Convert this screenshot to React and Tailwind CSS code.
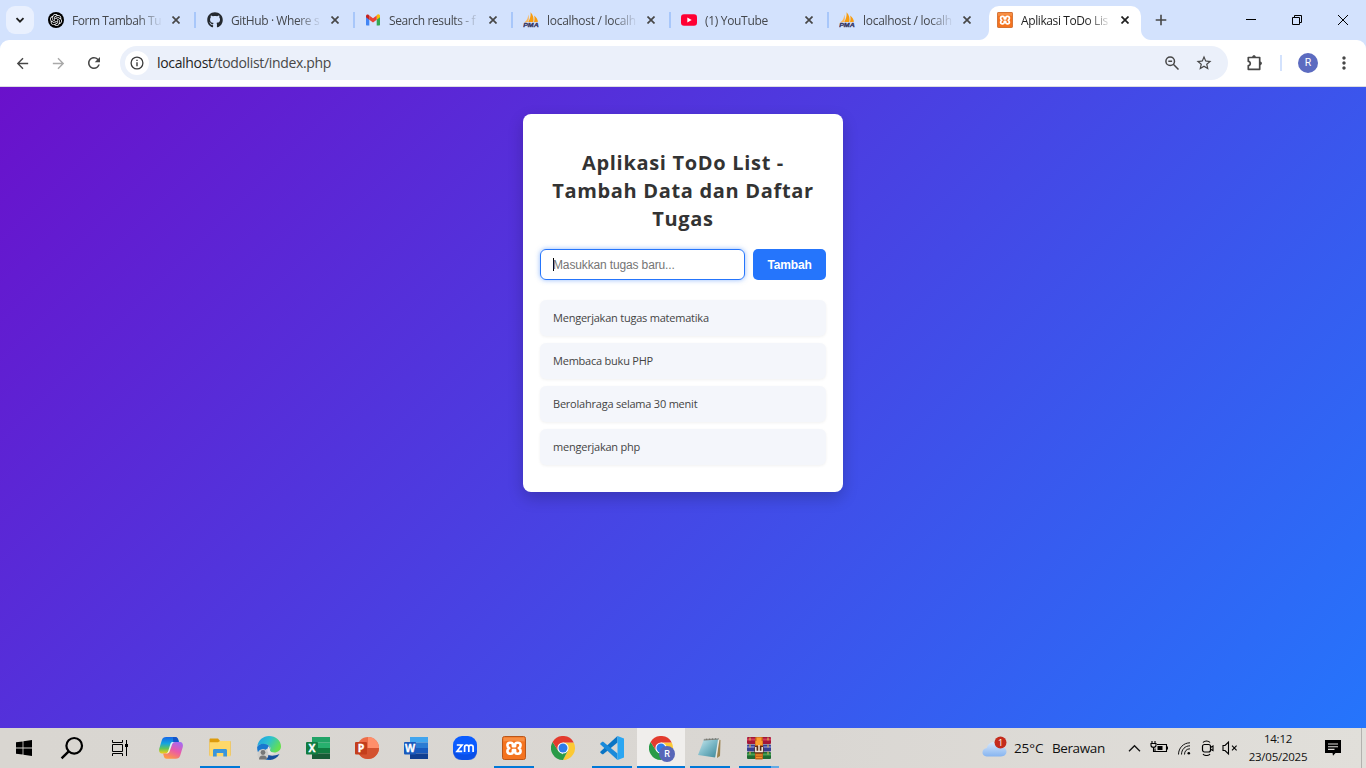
import React from 'react';
import { FaGithub } from 'react-icons/fa';
import { SiOpenai } from 'react-icons/si';
import { MdArrowBack, MdArrowForward, MdRefresh, MdStarBorder, MdMoreVert } from 'react-icons/md';

function Svg({ s = 24, vb = '0 0 24 24', children, className = '' }) {
  return (
    <svg width={s} height={s} viewBox={vb} fill="none" className={`shrink-0 ${className}`}>
      {children}
    </svg>
  );
}

/* ---------- favicons and app logos ---------- */

function GptIcon() {
  return (
    <span className="flex size-4 items-center justify-center rounded-full bg-black text-white">
      <SiOpenai size={12} />
    </span>
  );
}

function GmailIcon() {
  return (
    <Svg s={16} vb="0 0 16 16">
      <path d="M1 4v8.5c0 .6.4 1 1 1h2.3V7.2z" fill="#4285f4" />
      <path d="M15 4v8.5c0 .6-.4 1-1 1h-2.3V7.2z" fill="#34a853" />
      <path d="M11.7 3.6v4.2L15 5.3V4c0-1.4-1.4-2.2-2.5-1.4z" fill="#fbbc04" />
      <path d="M4.3 7.8V3.4L8 6.2l3.7-2.8v4.4L8 10.6z" fill="#ea4335" />
      <path d="M1 4v1.3l3.3 2.5V3.6l-.8-.8C2.400 2 1 2.700 1 4z" fill="#c5221f" />
    </Svg>
  );
}

function PmaIcon() {
  return (
    <Svg s={16} vb="0 0 16 16">
      <path d="M7.600 0.300c2.800 3 3.400 6.500 2.700 9.800H5.200C7 7 7.900 4 7.600.3z" fill="#f89c0e" />
      <path d="M5 2.600C5.400 5.500 4.500 8 1.500 10.200h3.200C6.300 7.700 6.200 5 5 2.600z" fill="#fbb75a" />
      <path d="M11.200 3.500c2.300 2 3.500 4.200 3.800 6.300l-4 .4c.6-2.200.7-4.400.2-6.700z" fill="#f89c0e" />
      <text x="0.200" y="15.200" fontFamily="Liberation Sans, sans-serif" fontWeight="700" fontStyle="italic" fontSize="5.800" textLength="15.500" lengthAdjust="spacingAndGlyphs" fill="#34345f" stroke="#34345f" strokeWidth=".3">PMA</text>
    </Svg>
  );
}

function YoutubeIcon() {
  return (
    <Svg s={16} vb="0 0 16 16">
      <rect x="0" y="2.300" width="16" height="11.400" rx="3" fill="#ff0033" />
      <path d="M6.300 5.500v5l4.400-2.500z" fill="#fff" />
    </Svg>
  );
}

function XamppIcon({ s = 24 }) {
  return (
    <Svg s={s}>
      <rect x=".5" y=".5" width="23" height="23" rx="2" fill="#f4731f" stroke="#b9561a" />
      <path d="M1.500 1.500h21v4c-7-1-14-1-21 0z" fill="#f9a05c" opacity=".6" />
      <path d="M8 6.700h.8c1.500 0 2.100 1 2.100 2.200v1.400h2.200V8.900c0-1.200.7-2.200 2.100-2.200h.8c1.700 0 2.600 1.300 2.600 2.600 0 1.400-.8 2.300-1.800 2.900 1 .6 1.800 1.500 1.800 2.900 0 1.300-.9 2.600-2.600 2.600h-.8c-1.400 0-2.100-1-2.100-2.200v-1.400h-2.200v1.400c0 1.200-.6 2.200-2.100 2.200H8c-1.700 0-2.600-1.300-2.600-2.600 0-1.400.8-2.300 1.800-2.900-1-.6-1.800-1.500-1.800-2.900 0-1.300.9-2.600 2.600-2.600z" stroke="#fff" strokeWidth="2.600" strokeLinejoin="round" />
    </Svg>
  );
}

function WindowsIcon() {
  return (
    <Svg s={16} vb="0 0 16 16">
      <path d="M0 2.300 6.600 1.400v6.200H0zM7.400 1.300 16 0v7.600H7.400zM0 8.400h6.600v6.200L0 13.700zM7.400 8.400H16V16l-8.600-1.300z" fill="#000" />
    </Svg>
  );
}

function SearchIcon() {
  return (
    <Svg>
      <circle cx="14.200" cy="9.800" r="7.800" stroke="#000" strokeWidth="2.200" />
      <path d="M8.700 15.300 1.600 22.400" stroke="#000" strokeWidth="2.400" />
    </Svg>
  );
}

function TaskViewIcon() {
  return (
    <Svg s={16} vb="0 0 16 16">
      <path d="M.5 0v2.500h10V0M.5 16v-2.500h10V16M.5 4.500h10v7H.5zM14.500 0v16" stroke="#000" strokeWidth="1" />
      <rect x="13" y="4" width="3" height="3" fill="#000" />
    </Svg>
  );
}

function CopilotIcon() {
  return (
    <Svg>
      <defs>
        <linearGradient id="cpA" x1="0" y1="0" x2="0" y2="1">
          <stop offset="0" stopColor="#1565e8" />
          <stop offset=".4" stopColor="#15a5de" />
          <stop offset=".7" stopColor="#62c45c" />
          <stop offset="1" stopColor="#f5cd15" />
        </linearGradient>
        <linearGradient id="cpB" x1=".8" y1="0" x2=".3" y2="1">
          <stop offset="0" stopColor="#a46bf2" />
          <stop offset=".5" stopColor="#ea5aa8" />
          <stop offset="1" stopColor="#ff9a42" />
        </linearGradient>
      </defs>
      <path d="M7.300 1h9c1.500 0 2.300 1 2.800 2.300l.8 2.700h-2.700c-2 0-2.900.9-3.500 2.700l-2 6c-.6 1.800-1.500 2.700-3.400 2.700H3C.5 17.400-.4 15.200.3 12.600l2.500-8.400C3.500 2 4.800 1 7.300 1z" fill="url(#cpA)" />
      <path d="M14 1h2.300c1.500 0 2.300 1 2.800 2.300l.8 2.700h-2.700c-1.500 0-2.400.5-3 1.800z" fill="#1455c8" />
      <path d="M16.700 22.800h-9c-1.500 0-2.300-1-2.800-2.300L4.100 17.400h3.200c2 0 2.900-.9 3.500-2.700l2-6c.6-1.800 1.500-2.700 3.400-2.700H21c2.500 0 3.400 2.600 2.700 5.200l-2.500 8.400c-.7 2.200-2 3.200-4.500 3.200z" fill="url(#cpB)" />
      <path d="M12.700 9.400c.6-2 1.600-3.400 3.500-3.400h-2.600c-1.200 0-1.800.7-2.200 2l-2 6.500c-.5 1.800-1.200 2.900-2.600 2.900h1c1.700 0 2.400-1 3-2.700z" fill="#fff" opacity=".85" />
    </Svg>
  );
}

function ExplorerIcon() {
  return (
    <Svg>
      <path d="M1.500 3.500c0-.6.4-1 1-1h7.500l2 2.500H21.500c.6 0 1 .4 1 1v13.500h-21z" fill="#dd9b0b" />
      <path d="M1.500 6.300H10L12 5h9.500c.6 0 1 .4 1 1v14.300h-21z" fill="#ffd869" />
      <path d="M5 20.500V14.500c0-.8.6-1.400 1.400-1.400h11.200c.8 0 1.400.6 1.400 1.400v6h-3.700v-3.500H8.700v3.500z" fill="#3996dc" />
    </Svg>
  );
}

function EdgeIcon() {
  return (
    <Svg>
      <defs>
        <linearGradient id="edA" x1="0" y1="0" x2="1" y2=".5">
          <stop offset="0" stopColor="#1c9be8" />
          <stop offset=".5" stopColor="#2cc0d0" />
          <stop offset="1" stopColor="#65e050" />
        </linearGradient>
      </defs>
      <path d="M.3 10C1.300 4.200 6.200 0 12 0c6.700 0 12 4.600 12 10.200 0 3.900-3 6.300-6.800 6.300-3.500 0-4.800-1.300-4.300-2.500 1.300-1.700.6-5-3.600-5.600C5.500 7.800 2.500 8 .3 10z" fill="url(#edA)" />
      <path d="M.1 11C2 7.500 6 7 9.500 8.300c2.600 1 3.800 2.700 3.500 4.700-2.700-1.500-5.300.3-5 4 .2 3.200 2.600 6 6 7C6 25 0 19 .1 11z" fill="#1878cf" />
      <path d="M8 15c.5 4.500 7 6.300 14.500 3-2 3.700-5.500 5.800-9.500 6C9.500 23.300 7.500 19.500 8 15z" fill="#174f9c" />
      <path d="M11 10.500c1.500 0 2 1.200 1.900 3.500.3 2 2.500 2.800 5 3l-3.500 1.500H10z" fill="#e4e4e2" />
      <circle cx="6" cy="18.500" r="5.500" fill="#cfcecb" />
      <circle cx="6" cy="16.500" r="2.400" fill="#777" />
      <path d="M2 23.500c0-2.600 1.300-4 4-4s4 1.400 4 4z" fill="#777" />
    </Svg>
  );
}

function OfficeIcon({ letter, shades, tile, round }) {
  return (
    <Svg>
      {round ? (
        <g>
          <circle cx="13" cy="12" r="11" fill={shades[1]} />
          <path d="M13 1a11 11 0 0 1 11 11H13z" fill={shades[0]} />
          <path d="M2 12h22a11 11 0 0 1-22 0z" fill={shades[2]} />
        </g>
      ) : (
        <g>
          <rect x="6" y="1" width="18" height="5.500" fill={shades[0]} />
          <rect x="6" y="6.500" width="18" height="5.500" fill={shades[1]} />
          <rect x="6" y="12" width="18" height="5.500" fill={shades[2]} />
          <rect x="6" y="17.500" width="18" height="5.500" fill={shades[3]} />
        </g>
      )}
      <rect x="0" y="6" width="12" height="12.500" rx="1" fill={tile} />
      <text x="6" y="16" textAnchor="middle" fontFamily="Open Sans, sans-serif" fontWeight="700" fontSize="10.500" fill="#fff" stroke="#fff" strokeWidth=".3">{letter}</text>
    </Svg>
  );
}

function ZoomAppIcon() {
  return (
    <Svg>
      <rect x="0" y="0" width="24" height="24" rx="9" fill="#0b5cff" />
      <path d="M0 14c5 6 18 6 24 0 0 7-3 10-9 10H9c-6 0-9-3-9-10z" fill="#0846d8" opacity=".6" />
      <path d="M3.800 9H9l-5 6.300h5.200M11.600 16V11c0-2.500 4.200-2.500 4.200 0v5M15.800 11c0-2.500 4.300-2.500 4.300 0v5" stroke="#fff" strokeWidth="1.700" />
    </Svg>
  );
}

function ChromeIcon({ badge }) {
  return (
    <Svg s={26} vb="0 0 26 26">
      <path d="M12 6.500h10.700A12 12 0 0 1 12 24l4.800-9.200z" fill="#fcc934" />
      <path d="M1.600 6 7.200 14.800l4.800 3.700L12 24A12 12 0 0 1 1.600 6z" fill="#2a9b48" />
      <path d="M12 24l4.800-9.200L12 17z" fill="#2a9b48" />
      <path d="M1.600 6A12 12 0 0 1 22.700 6.500H12l-4.800 8.300z" fill="#e33b2e" />
      <circle cx="12" cy="12" r="5.600" fill="#fff" />
      <circle cx="12" cy="12" r="4.500" fill="#2e7cea" />
      {badge && (
        <g>
          <circle cx="18" cy="18" r="8" fill="#5867b8" />
          <text x="18" y="21.300" textAnchor="middle" fontFamily="Roboto, sans-serif" fontWeight="500" fontSize="9" fill="#fff">R</text>
        </g>
      )}
    </Svg>
  );
}

function VscodeIcon() {
  return (
    <Svg>
      <path d="M17.500 0v6.500L3.200 18.200c-.3.200-.7.200-1 0L.5 16.700c-.4-.4-.4-.9 0-1.300z" fill="#0a74c4" />
      <path d="M17.500 24v-6.500L3.200 5.800c-.3-.2-.7-.2-1 0L.5 7.300c-.4.4-.4.900 0 1.300z" fill="#1a8ada" />
      <path d="M17.500 0 24 2.600v18.800L17.500 24z" fill="#2ba6f2" />
    </Svg>
  );
}

function NotepadIcon() {
  return (
    <Svg>
      <defs>
        <linearGradient id="npA" x1="0" y1="0" x2="1" y2="1">
          <stop offset="0" stopColor="#cdeaf0" />
          <stop offset=".5" stopColor="#7cb9c7" />
          <stop offset="1" stopColor="#3e8799" />
        </linearGradient>
      </defs>
      <path d="M20 3.500 22.500 4l-.5 16-3 2z" fill="#9c8350" />
      <path d="m19.500 3 2 .5-3 18.700-2-.7z" fill="#e8e8e0" />
      <path d="M6 3.200 20.200 2.500l-3 19L0 19z" fill="url(#npA)" />
      <path d="M6 2.700 20.500 2l.2 1.500L5.700 4.500z" fill="#787870" />
      <path d="M7 2v1.500M10 1.900v1.500M13 1.800v1.500M16 1.700v1.500M19 1.600v1.500" stroke="#ddd" strokeWidth="1" />
    </Svg>
  );
}

function WinrarIcon() {
  return (
    <Svg>
      <rect x="0" y="1" width="24" height="7" rx="1" fill="#a31737" />
      <rect x="0" y="2.500" width="24" height="2" fill="#d33a5c" />
      <rect x="0" y="8.500" width="24" height="7" rx="1" fill="#37408f" />
      <rect x="0" y="10" width="24" height="2" fill="#6b72c2" />
      <rect x="0" y="16" width="24" height="7" rx="1" fill="#1f6b33" />
      <rect x="0" y="17.500" width="24" height="2" fill="#45a255" />
      <path d="M3 1.500v21M21 1.500v21" stroke="#d8b050" strokeWidth="1.200" strokeDasharray="3 4" />
      <rect x="8" y="1" width="8" height="22.500" rx="1" fill="#c2641a" />
      <path d="M9.500 1.500h5v3.500h1v4h-7V5h1z" fill="#fba02c" />
      <rect x="7.500" y="10" width="9" height="7.500" rx="1" fill="#5c2a12" />
      <path d="M8.800 11v4.500h6.400V11M12 9v6" stroke="#f2e8d8" strokeWidth="1.500" />
      <path d="M9 19h6M9 21.500h6" stroke="#f3932c" strokeWidth="1.200" />
    </Svg>
  );
}

/* ---------- browser ---------- */

function CloseX({ active }) {
  return (
    <Svg s={8} vb="0 0 8 8">
      <path d="M.5.5l7 7M7.500.5l-7 7" stroke={active ? '#1f1f1f' : '#474747'} strokeWidth="1.700" />
    </Svg>
  );
}

const tabs = [
  { icon: <GptIcon />, title: 'Form Tambah Tu', cls: 'mr-px', sp: 'tracking-[-0.45px]' },
  { icon: <FaGithub size={16} color="#24292f" />, title: 'GitHub · Where s', sp: 'tracking-[-0.4px]' },
  { icon: <GmailIcon />, title: 'Search results - f', sp: 'tracking-[-0.38px]' },
  { icon: <PmaIcon />, title: 'localhost / localh', sp: 'tracking-[-0.28px]' },
  { icon: <YoutubeIcon />, title: '(1) YouTube', sp: 'tracking-[-0.32px]' },
  { icon: <PmaIcon />, title: 'localhost / localh', sp: 'tracking-[-0.28px]', last: true },
];

function TabTitle({ children, className }) {
  return (
    <div className={`ml-2 w-[92px] whitespace-nowrap pt-[2px] text-[12px] leading-4 [mask-image:linear-gradient(to_right,#000_66px,transparent_91px)] ${className}`}>
      {children}
    </div>
  );
}

function Tab({ t }) {
  return (
    <div className={`flex h-10 shrink-0 items-center pl-[9px] ${t.last ? 'w-[150px]' : 'w-[158px]'} ${t.cls || ''}`}>
      {t.icon}
      <TabTitle className={`text-[#45484d] ${t.sp}`}>{t.title}</TabTitle>
      <div className="ml-[6px] flex w-3 justify-center"><CloseX /></div>
      {!t.last && <div className="ml-auto mr-px h-4 w-[2px] bg-[#a8c7fa]" />}
    </div>
  );
}

function Flare({ flip }) {
  return (
    <svg width="10" height="10" viewBox="0 0 10 10" className={`shrink-0 self-end ${flip ? '-scale-x-100' : ''}`}>
      <path d="M10 0v10H0C5.500 10 10 5.500 10 0z" fill="#fff" />
    </svg>
  );
}

function TabStrip() {
  return (
    <div className="flex h-10 items-center bg-[#d3e2fd]">
      <div className="ml-[6px] mr-[5px] flex size-7 shrink-0 items-center justify-center rounded-[9px] bg-[#e9f0fe]">
        <Svg s={10} vb="0 0 10 10"><path d="m1.500 3.200 3.500 3.500 3.500-3.500" stroke="#1f1f1f" strokeWidth="1.800" /></Svg>
      </div>
      {tabs.map((t, i) => <Tab key={i} t={t} />)}
      <div className="-ml-px flex h-full shrink-0 items-center">
        <Flare />
        <div className="flex h-[34px] w-[152px] items-center self-end rounded-t-[10px] bg-white pb-[6px] pl-2">
          <XamppIcon s={16} />
          <TabTitle className="tracking-[-0.4px] text-[#1f1f1f]">Aplikasi ToDo Lis</TabTitle>
          <div className="ml-[6px] flex w-3 justify-center"><CloseX active /></div>
        </div>
        <Flare flip />
      </div>
      <Svg s={12} vb="0 0 12 12" className="ml-1"><path d="M6 .7v10.600M.7 6h10.600" stroke="#474747" strokeWidth="1.600" /></Svg>
      <div className="ml-auto flex">
        <div className="flex w-[46px] justify-center"><Svg s={10} vb="0 0 10 10"><path d="M0 4.500h10" stroke="#000" /></Svg></div>
        <div className="flex w-[46px] justify-center"><Svg s={10} vb="0 0 10 10"><path d="M.5 2.500h7v7h-7zM2.500 2.500v-2h7v7h-2" stroke="#000" /></Svg></div>
        <div className="flex w-[46px] justify-center"><Svg s={10} vb="0 0 10 10"><path d="m0 0 10 10M10 0 0 10" stroke="#000" /></Svg></div>
      </div>
    </div>
  );
}

function Toolbar() {
  return (
    <div className="bg-[#d3e2fd]">
      <div className="flex h-[47px] items-center rounded-t-[9px] border-b border-[#dcdde2] bg-white pl-[14px] text-[#474747]">
        <MdArrowBack size={17} />
        <MdArrowForward size={17} className="ml-[19px] text-[#a9a9a9]" />
        <MdRefresh size={18} className="ml-[18px]" />
        <div className="ml-[17px] flex h-[34px] w-[1108px] items-center rounded-full bg-[#ebf0fa] pl-[5px]">
          <div className="flex size-6 items-center justify-center rounded-full bg-white">
            <Svg s={14} vb="0 0 14 14">
              <circle cx="7" cy="7" r="5.900" stroke="#3c3c3c" strokeWidth="1.300" />
              <path d="M7 6.200v4M7 3.700v1.400" stroke="#3c3c3c" strokeWidth="1.400" />
            </Svg>
          </div>
          <div className="ml-2 text-[14px] leading-5 tracking-[-0.33px] text-[#474747]">
            <span className="text-[#1f1f1f]">localhost</span>/todolist/index.php
          </div>
          <Svg s={16} vb="0 0 16 16" className="ml-auto mr-[15px]">
            <circle cx="6.200" cy="6.200" r="4.300" stroke="#474747" strokeWidth="1.500" />
            <path d="M9.300 9.300 14.500 14.500M4.300 6.200h3.800" stroke="#474747" strokeWidth="1.500" />
          </Svg>
          <MdStarBorder size={18} className="mr-[15px]" />
        </div>
        <Svg s={18} vb="0 0 18 18" className="ml-[18px]">
          <path d="M2.300 3.500h11.400v11.800H2.300v-3.600c2.600 0 2.600-4.400 0-4.400z" stroke="#474747" strokeWidth="1.700" strokeLinejoin="round" />
          <path d="M6.200 3.200c0-2.600 3.600-2.600 3.600 0zM14 7.600c2.600 0 2.600 3.600 0 3.600z" fill="#474747" />
        </Svg>
        <div className="ml-4 h-4 w-[2px] bg-[#d3e2fd]" />
        <div className="ml-4 flex size-5 items-center justify-center rounded-full bg-[#5c6bc0] font-[Roboto,sans-serif] text-[10.500px] leading-none text-white">R</div>
        <MdMoreVert size={20} className="ml-4" />
      </div>
    </div>
  );
}

/* ---------- page ---------- */

const todos = ['Mengerjakan tugas matematika', 'Membaca buku PHP', 'Berolahraga selama 30 menit', 'mengerjakan php'];

function TodoPage() {
  return (
    <main className="flex h-[641px] justify-center bg-[linear-gradient(135deg,#6a11cb_0%,#2575fc_100%)] pt-[27px]">
      <div className="flex h-[378px] w-[320px] flex-col rounded-[8px] bg-white px-[17px] pt-[35px] shadow-[0_6px_16px_rgba(0,0,0,0.2)]">
        <h1 className="text-center text-[20px] font-bold leading-7 tracking-[0.68px] text-[#333]">
          Aplikasi ToDo List -<br />Tambah Data dan Daftar<br />Tugas
        </h1>
        <div className="mt-[16px] flex gap-2">
          <div className="flex h-[31px] w-[205px] items-center rounded-[6px] border-[1.500px] border-[#2575fc] pl-[12px] font-['Liberation_Sans',sans-serif] text-[12px] text-[#757575] shadow-[0_0_5px_rgba(37,117,252,0.5)]">
            <span className="-mr-px h-[13px] w-px bg-black" />
            <span className="tracking-[-0.14px]">Masukkan tugas baru...</span>
          </div>
          <button className="h-[31px] w-[73px] rounded-[5px] bg-[#2575fc] font-['Liberation_Sans',sans-serif] text-[12px] font-bold tracking-[-0.15px] text-white">Tambah</button>
        </div>
        <ul className="mt-5 flex flex-col gap-[7px]">
          {todos.map((t) => (
            <li key={t} className="flex h-9 items-center rounded-[6px] bg-[#f4f6fb] pl-[13px] text-[11px] tracking-[-0.22px] text-[#444] shadow-[0_1px_3px_rgba(0,0,0,0.06)]">{t}</li>
          ))}
        </ul>
      </div>
    </main>
  );
}

/* ---------- taskbar ---------- */

const apps = [
  { icon: <CopilotIcon /> },
  { icon: <ExplorerIcon />, run: true },
  { icon: <EdgeIcon /> },
  { icon: <OfficeIcon letter="X" tile="#107c41" shades={['#21a366', '#27b06e', '#107c41', '#185c37']} /> },
  { icon: <OfficeIcon letter="P" tile="#c43e1c" round shades={['#ff8f6b', '#ed6c47', '#d35230']} /> },
  { icon: <OfficeIcon letter="W" tile="#185abd" shades={['#41a5ee', '#2b7cd3', '#185abd', '#103f91']} /> },
  { icon: <ZoomAppIcon /> },
  { icon: <XamppIcon />, run: true },
  { icon: <div className="pl-0.5 pt-0.5"><ChromeIcon /></div> },
  { icon: <VscodeIcon />, run: true },
  { icon: <div className="pl-0.5 pt-0.5"><ChromeIcon badge /></div>, active: true },
  { icon: <NotepadIcon />, run: true },
  { icon: <WinrarIcon />, multi: true },
];

function AppButton({ a }) {
  return (
    <div className="flex h-10 w-[49px] shrink-0 flex-col items-center">
      <div className={`flex h-[38px] w-12 items-center justify-center pt-0.5 ${a.active ? 'bg-[#f0eeec]' : ''}`}>{a.icon}</div>
      {a.run && <div className="h-0.5 w-10 bg-[#0078d7]" />}
      {a.active && <div className="h-0.5 w-12 bg-[#0078d7]" />}
      {a.multi && <div className="flex h-0.5 w-10"><div className="w-8 bg-[#0078d7]" /><div className="w-2 bg-[#62abe6]" /></div>}
    </div>
  );
}

function Tray() {
  return (
    <div className="ml-auto flex h-full items-center text-[#111]">
      <Svg s={26} vb="0 0 26 26" className="mb-px">
        <defs>
          <linearGradient id="cl" x1="0" y1="0" x2="0" y2="1">
            <stop offset="0" stopColor="#d8e8fb" />
            <stop offset="1" stopColor="#86b4f0" />
          </linearGradient>
        </defs>
        <path d="M6 21.500c-3.200 0-5.500-1.600-5.500-4.100 0-2.300 1.700-4 4.300-4.300C5.500 9.400 8.300 7 12 7c3.500 0 6 2 6.800 5 3.500 0 5.700 2 5.700 4.600 0 3-2.200 4.900-5.500 4.900z" fill="url(#cl)" />
        <circle cx="18.500" cy="7.500" r="6" fill="#c42b1c" />
        <text x="18.500" y="10.700" textAnchor="middle" fontFamily="Open Sans, sans-serif" fontSize="9" fill="#fff">1</text>
      </Svg>
      <span className="ml-[6px] w-[38px] whitespace-nowrap text-[13.500px] tracking-[-0.1px]">25°C</span>
      <span className="w-[76px] whitespace-nowrap text-[13.500px] tracking-[-0.4px]">Berawan</span>
      <Svg s={13} vb="0 0 13 13"><path d="m1 9.300 5.500-5.600L12 9.300" stroke="#111" strokeWidth="1.300" /></Svg>
      <Svg s={18} vb="0 0 18 18" className="ml-[9px]">
        <path d="M7 5.500h9.500v7H5V9.500M17.500 7.500v3" stroke="#000" strokeWidth="1.100" />
        <rect x="7.500" y="7" width="5" height="4" fill="#000" />
        <path d="M2 2v2.500M5 2v2.500M1 4.500h5v1.800c0 2.700-5 2.700-5 0zM3.500 8.500v4H5" stroke="#000" strokeWidth="1.100" />
      </Svg>
      <Svg s={14} vb="0 0 14 14" className="ml-[9px]">
        <path d="M1.500 13.500C1.500 7 6.500 1.800 13 1.800M4.500 13.500c0-5 3.500-8.700 8.500-8.700M7.500 13.500c0-3.400 2.100-5.700 5.500-5.700" stroke="#111" strokeWidth="1" />
        <circle cx="11.800" cy="12.300" r="1.300" fill="#000" />
      </Svg>
      <Svg s={16} vb="0 0 16 16" className="ml-[9px]">
        <rect x="2.500" y="4.500" width="8" height="7.500" rx="2" stroke="#000" strokeWidth="1.200" />
        <path d="M10.500 7.500 13 6v4.500l-2.500-1.300M3 2.500C4.500.5 8.500.5 10 2.500M3 14c1.500 2 5.500 2 7 0" stroke="#000" strokeWidth="1.100" />
      </Svg>
      <Svg s={16} vb="0 0 16 16" className="ml-[6px]">
        <path d="M1 5.500h2L6.500 2v12L3 10.500H1z" stroke="#000" strokeWidth="1.100" />
        <path d="m10 5.700 4.600 4.600M14.600 5.700 10 10.300" stroke="#000" strokeWidth="1.100" />
      </Svg>
      <div className="ml-[9px] flex w-[62px] flex-col items-center whitespace-nowrap text-[11.500px] leading-[18px] tracking-[-0.25px]">
        <span>14:12</span>
        <span>23/05/2025</span>
      </div>
      <Svg s={16} vb="0 0 16 16" className="ml-[16px]">
        <path d="M0 0h16v13H10.500L8 15.800 7.500 13H0z" fill="#000" />
        <path d="M3 4h10M3 6.700h10M3 9.400h6.500" stroke="#e0ddda" strokeWidth="1.100" />
      </Svg>
      <div className="ml-[20px] h-10 w-px bg-[#b3b1ae]" />
      <div className="w-1" />
    </div>
  );
}

function Taskbar() {
  return (
    <footer className="flex h-10 items-center bg-[linear-gradient(to_right,#d9d6d1,#dad7d3_60%,#e1dfda)]">
      <div className="flex w-12 justify-center"><WindowsIcon /></div>
      <div className="flex w-12 justify-center"><SearchIcon /></div>
      <div className="mr-[2.500px] flex w-12 justify-center"><TaskViewIcon /></div>
      {apps.map((a, i) => <AppButton key={i} a={a} />)}
      <Tray />
    </footer>
  );
}

export default function App() {
  return (
    <div className="h-[768px] w-[1366px] overflow-hidden font-['Open_Sans','Noto_Sans',sans-serif]">
      <TabStrip />
      <Toolbar />
      <TodoPage />
      <Taskbar />
    </div>
  );
}
